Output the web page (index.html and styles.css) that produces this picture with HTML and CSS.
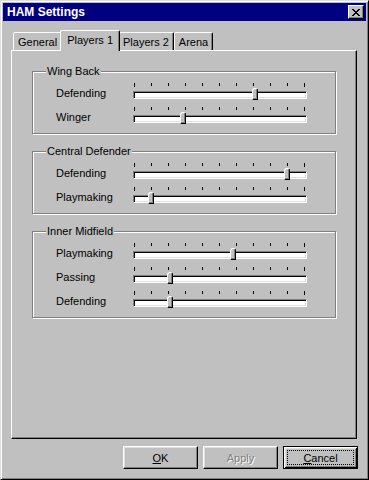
FILE: index.html
```html
<!DOCTYPE html>
<html>
<head>
  <title>HAM Settings</title>
  <meta name="viewport" content="width=device-width, initial-scale=1.0">
  <link rel="stylesheet" href="styles.css">
</head>
<body>
  <div class="window">
    <div class="caption">
      <span class="caption-title">HAM Settings</span>
      <span class="close-btn">
        <svg width="8" height="7" viewBox="0 0 8 7" shape-rendering="crispEdges"><path d="M0 0h2v1h-2zM6 0h2v1h-2zM1 1h2v1h-2zM5 1h2v1h-2zM2 2h4v1h-4zM3 3h2v1h-2zM2 4h4v1h-4zM1 5h2v1h-2zM5 5h2v1h-2zM0 6h2v1h-2zM6 6h2v1h-2z" fill="#000"/></svg>
      </span>
    </div>

    <div class="content">
      <div class="tabs">
        <div class="tab">General</div>
        <div class="tab active">Players 1</div>
        <div class="tab">Players 2</div>
        <div class="tab">Arena</div>
      </div>

      <div class="panel">
        <div class="group">
          <span class="group-label">Wing Back</span>
          <div class="row">
            <span class="row-label">Defending</span>
            <div class="slider">
              <div class="ticks"><i class="tick end"></i><i class="tick"></i><i class="tick"></i><i class="tick"></i><i class="tick"></i><i class="tick"></i><i class="tick"></i><i class="tick"></i><i class="tick"></i><i class="tick"></i><i class="tick end"></i></div>
              <div class="track"></div>
              <div class="thumb" style="left:119px"></div>
            </div>
          </div>
          <div class="row">
            <span class="row-label">Winger</span>
            <div class="slider">
              <div class="ticks"><i class="tick end"></i><i class="tick"></i><i class="tick"></i><i class="tick"></i><i class="tick"></i><i class="tick"></i><i class="tick"></i><i class="tick"></i><i class="tick"></i><i class="tick"></i><i class="tick end"></i></div>
              <div class="track"></div>
              <div class="thumb" style="left:47px"></div>
            </div>
          </div>
        </div>

        <div class="group">
          <span class="group-label">Central Defender</span>
          <div class="row">
            <span class="row-label">Defending</span>
            <div class="slider">
              <div class="ticks"><i class="tick end"></i><i class="tick"></i><i class="tick"></i><i class="tick"></i><i class="tick"></i><i class="tick"></i><i class="tick"></i><i class="tick"></i><i class="tick"></i><i class="tick"></i><i class="tick end"></i></div>
              <div class="track"></div>
              <div class="thumb" style="left:151px"></div>
            </div>
          </div>
          <div class="row">
            <span class="row-label">Playmaking</span>
            <div class="slider">
              <div class="ticks"><i class="tick end"></i><i class="tick"></i><i class="tick"></i><i class="tick"></i><i class="tick"></i><i class="tick"></i><i class="tick"></i><i class="tick"></i><i class="tick"></i><i class="tick"></i><i class="tick end"></i></div>
              <div class="track"></div>
              <div class="thumb" style="left:15px"></div>
            </div>
          </div>
        </div>

        <div class="group">
          <span class="group-label">Inner Midfield</span>
          <div class="row">
            <span class="row-label">Playmaking</span>
            <div class="slider">
              <div class="ticks"><i class="tick end"></i><i class="tick"></i><i class="tick"></i><i class="tick"></i><i class="tick"></i><i class="tick"></i><i class="tick"></i><i class="tick"></i><i class="tick"></i><i class="tick"></i><i class="tick end"></i></div>
              <div class="track"></div>
              <div class="thumb" style="left:97px"></div>
            </div>
          </div>
          <div class="row">
            <span class="row-label">Passing</span>
            <div class="slider">
              <div class="ticks"><i class="tick end"></i><i class="tick"></i><i class="tick"></i><i class="tick"></i><i class="tick"></i><i class="tick"></i><i class="tick"></i><i class="tick"></i><i class="tick"></i><i class="tick"></i><i class="tick end"></i></div>
              <div class="track"></div>
              <div class="thumb" style="left:34px"></div>
            </div>
          </div>
          <div class="row">
            <span class="row-label">Defending</span>
            <div class="slider">
              <div class="ticks"><i class="tick end"></i><i class="tick"></i><i class="tick"></i><i class="tick"></i><i class="tick"></i><i class="tick"></i><i class="tick"></i><i class="tick"></i><i class="tick"></i><i class="tick"></i><i class="tick end"></i></div>
              <div class="track"></div>
              <div class="thumb" style="left:34px"></div>
            </div>
          </div>
        </div>
      </div>

      <div class="buttons">
        <div class="btn"><span><u>O</u>K</span></div>
        <div class="btn disabled"><span>Apply</span></div>
        <div class="btn default"><span class="focus"><u>C</u>ancel</span></div>
      </div>
    </div>
  </div>
</body>
</html>
```

FILE: styles.css
```css
* { box-sizing: border-box; }
body { margin: 0; background: #c0c0c0; font-family: "Liberation Sans", Arial, sans-serif; font-size: 11px; color: #000; }

.window { width: 369px; height: 480px; padding: 2px; background: #c0c0c0; border: 1px solid; border-color: #dfdfdf #000 #000 #dfdfdf; box-shadow: inset 1px 1px #fff, inset -1px -1px #808080; }

.caption { height: 18px; background: #000080; display: flex; align-items: center; justify-content: space-between; padding: 0 2px 0 4px; }
.caption-title { color: #fff; font-weight: bold; font-size: 12px; }
.close-btn { width: 16px; height: 14px; background: #c0c0c0; border: 1px solid; border-color: #fff #000 #000 #fff; box-shadow: inset -1px -1px #808080; display: flex; align-items: center; justify-content: center; }

.content { padding: 9px 8px 0 8px; }

.tabs { display: flex; align-items: flex-end; height: 20px; padding-left: 2px; position: relative; z-index: 1; }
.tab { height: 18px; padding: 0 4px; background: #c0c0c0; border: 1px solid; border-bottom: none; border-color: #fff #000 transparent #fff; box-shadow: inset -1px 0 #808080; border-radius: 2px 2px 0 0; display: flex; align-items: center; }
.tab.active { position: relative; z-index: 2; height: 21px; margin: 0 -2px -1px; padding: 0 6px 2px; }

.panel { width: 346px; height: 389px; padding: 20px 0 0 20px; border: 1px solid; border-color: #fff #000 #000 #fff; box-shadow: inset -1px -1px #808080; }

.group { position: relative; width: 304px; margin-bottom: 17px; padding: 9px 0 4px 23px; border: 1px solid #808080; box-shadow: inset 1px 1px #fff, 1px 1px #fff; }
.group-label { position: absolute; top: -7px; left: 13px; padding: 0 1px; line-height: 13px; background: #c0c0c0; }

.row { display: flex; height: 24px; }
.row-label { width: 77px; padding-top: 6px; line-height: 13px; }
.slider { position: relative; width: 174px; }
.ticks { display: flex; justify-content: space-between; align-items: flex-start; width: 171px; height: 4px; margin: 2px 0 0 1px; }
.tick { width: 1px; height: 3px; background: #000; }
.tick.end { height: 4px; }
.track { height: 8px; margin-top: 4px; background: #fff; border: 1px solid; border-color: #808080 #fff #fff #808080; box-shadow: inset 1px 1px #000, inset -1px -1px #dfdfdf; }
.thumb { position: absolute; top: 7px; width: 6px; height: 12px; background: #c0c0c0; border: 1px solid; border-color: #fff #000 #000 #fff; box-shadow: inset -1px -1px #808080; border-radius: 3px 3px 0 0; }

.buttons { display: flex; justify-content: flex-end; gap: 5px; margin-top: 7px; }
.btn { width: 75px; height: 23px; display: flex; align-items: center; justify-content: center; background: #c0c0c0; border: 1px solid; border-color: #fff #000 #000 #fff; box-shadow: inset -1px -1px #808080, inset 1px 1px #dfdfdf; }
.btn.disabled { color: #808080; text-shadow: 1px 1px #fff; }
.btn.default { padding: 3px; border-color: #000; box-shadow: inset 1px 1px #fff, inset -1px -1px #000, inset 2px 2px #dfdfdf, inset -2px -2px #808080; }
.focus { flex: 1; align-self: stretch; display: flex; align-items: center; justify-content: center; border: 1px dotted #000; }
```
